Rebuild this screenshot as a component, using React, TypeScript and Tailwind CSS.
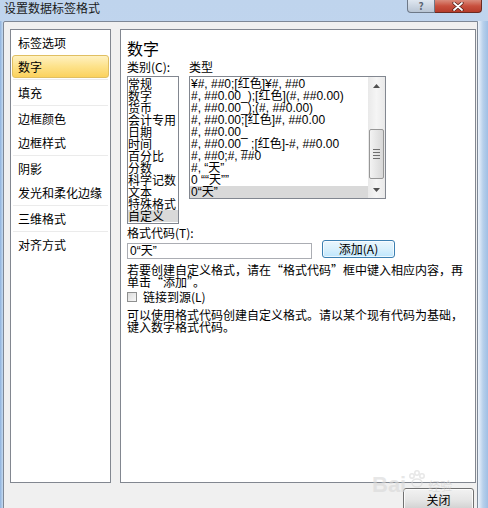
import React from "react";

const navGroups: { label: string; selected?: boolean }[][] = [
  [{ label: "标签选项" }, { label: "数字", selected: true }],
  [{ label: "填充" }],
  [{ label: "边框颜色" }, { label: "边框样式" }],
  [{ label: "阴影" }, { label: "发光和柔化边缘" }],
  [{ label: "三维格式" }],
  [{ label: "对齐方式" }],
];

const categories = [
  "常规",
  "数字",
  "货币",
  "会计专用",
  "日期",
  "时间",
  "百分比",
  "分数",
  "科学记数",
  "文本",
  "特殊格式",
  "自定义",
];

const types = [
  "¥#, ##0;[红色]¥#, ##0",
  "#, ##0.00_);[红色](#, ##0.00)",
  "#, ##0.00_);(#, ##0.00)",
  "#, ##0.00;[红色]#, ##0.00",
  "#, ##0.00_",
  "#, ##0.00_ ;[红色]-#, ##0.00",
  "#, ##0;#, ##0",
  "#, “天”",
  "0 ““天””",
  "0“天”",
];

export default function App() {
  return (
    <div
      lang="zh-CN"
      className="relative w-[488px] h-[508px] overflow-hidden bg-gradient-to-b from-[#bfd4ed] to-[#cadcf1] font-['Noto_Sans_CJK_SC','Liberation_Sans',sans-serif] text-[12px] text-black"
    >
      {/* Title bar */}
      <div className="h-[21px] flex items-start">
        <div className="pl-[4px] pt-[0px] leading-[16px] text-[12px] text-[#1a1a1a]">设置数据标签格式</div>
        <div className="ml-auto mr-[6px] flex">
          <div className="w-[28px] h-[13px] rounded-bl-[4px] border border-t-0 border-[#6d7887] bg-gradient-to-b from-[#dfe7f0] to-[#b9c5d4] flex items-center justify-center">
            <span className="text-[10px] leading-[10px] font-bold text-[#5a6472]">?</span>
          </div>
          <div className="w-[47px] h-[13px] rounded-br-[4px] border border-l-0 border-t-0 border-[#6b2a22] bg-gradient-to-b from-[#d98b7c] via-[#c8503e] to-[#b63c2b] flex items-center justify-center">
            <svg width="12" height="9" viewBox="0 0 12 9">
              <path d="M2 1 L10 8 M10 1 L2 8" stroke="#4a1a14" strokeWidth="3.2" strokeLinecap="round" />
              <path d="M2 1 L10 8 M10 1 L2 8" stroke="#ffffff" strokeWidth="1.8" strokeLinecap="round" />
            </svg>
          </div>
        </div>
      </div>

      {/* Body */}
      <div className="flex h-[487px]">
        <div className="w-[3px] bg-gradient-to-r from-[#8fb2dc] to-[#c5dbf1]" />
        <div className="w-[475px] h-[488px] border border-[#7e8896] rounded-tl-[2px] bg-[#f0f0f0] flex flex-col">
          <div className="flex pl-[6px] pt-[7px] gap-[9px]">
            {/* Left nav */}
            <div className="w-[101px] h-[454px] bg-white border border-[#828790] pt-[1px] flex flex-col">
              {navGroups.map((g, gi) => (
                <React.Fragment key={gi}>
                  {gi > 0 && <div className="h-[2px] mx-[2px] border-t border-[#ebebeb]" />}
                  {g.map((it) =>
                    it.selected ? (
                      <div
                        key={it.label}
                        className="mx-[1px] mb-[1px] h-[23px] rounded-[3px] border border-[#e0bf62] bg-gradient-to-b from-[#fff1bf] via-[#fde28a] to-[#fbd25c] flex items-center pl-[5px]"
                      >
                        {it.label}
                      </div>
                    ) : (
                      <div key={it.label} className="h-[24px] flex items-center pl-[7px]">
                        {it.label}
                      </div>
                    )
                  )}
                </React.Fragment>
              ))}
            </div>

            {/* Right panel */}
            <div className="w-[356px] h-[454px] bg-white border border-[#828790] pl-[6px] pt-[8px] flex flex-col">
              <div className="text-[16px] leading-[20px]">数字</div>
              <div className="mt-[2px] flex leading-[14px]">
                <div className="w-[62px]">类别(C):</div>
                <div>类型</div>
              </div>
              <div className="mt-[2px] flex items-start">
                {/* category list */}
                <div className="w-[52px] h-[148px] border border-[#828790] pt-[1px] flex flex-col">
                  {categories.map((c) => (
                    <div
                      key={c}
                      className={`h-[12px] leading-[12px] text-[12px] whitespace-nowrap ${c === "自定义" ? "bg-[#d9d9d9]" : ""}`}
                    >
                      {c}
                    </div>
                  ))}
                </div>
                {/* type list */}
                <div className="ml-[10px] w-[197px] h-[123px] border border-[#828790] flex">
                  <div className="flex-1 pt-[1px] flex flex-col overflow-hidden font-['Liberation_Sans','Noto_Sans_CJK_SC',sans-serif]">
                    {types.map((t, i) => (
                      <div
                        key={i}
                        className={`h-[12px] leading-[12px] text-[12px] pl-[1px] whitespace-pre ${i === types.length - 1 ? "bg-[#d9d9d9]" : ""}`}
                      >
                        {t}
                      </div>
                    ))}
                  </div>
                  <div className="w-[17px] flex flex-col bg-gradient-to-r from-[#e9e9e9] via-[#f5f5f5] to-[#e9e9e9]">
                    <div className="h-[17px] flex items-center justify-center">
                      <svg width="7" height="4" viewBox="0 0 7 4">
                        <path d="M0 4 L3.5 0 L7 4 Z" fill="#505050" />
                      </svg>
                    </div>
                    <div className="flex-1 pt-[35px] px-[1px]">
                      <div className="h-[50px] rounded-[2px] border border-[#979797] bg-gradient-to-r from-[#f3f3f3] to-[#d8d8d8] flex flex-col items-center justify-center gap-[2px]">
                        <div className="w-[7px] h-[1px] bg-[#6f6f6f]" />
                        <div className="w-[7px] h-[1px] bg-[#6f6f6f]" />
                        <div className="w-[7px] h-[1px] bg-[#6f6f6f]" />
                        <div className="w-[7px] h-[1px] bg-[#6f6f6f]" />
                      </div>
                    </div>
                    <div className="h-[17px] flex items-center justify-center">
                      <svg width="7" height="4" viewBox="0 0 7 4">
                        <path d="M0 0 L3.5 4 L7 0 Z" fill="#505050" />
                      </svg>
                    </div>
                  </div>
                </div>
              </div>

              <div className="mt-[2px] leading-[14px]">格式代码(T):</div>
              <div className="flex items-start">
                <div className="mt-[3px] w-[185px] h-[16px] border border-[#abadb3] bg-white pl-[2px] leading-[14px] font-['Liberation_Sans','Noto_Sans_CJK_SC',sans-serif]">
                  0“天”
                </div>
                <div className="ml-[10px] w-[73px] h-[18px] rounded-[3px] border border-[#3c7fb1] bg-gradient-to-b from-[#eaf6fd] via-[#d9f0fc] to-[#bee6fd] flex items-center justify-center leading-[14px] shadow-[inset_0_0_0_1px_rgba(255,255,255,0.7)]">
                  添加(A)
                </div>
              </div>

              <div className="mt-[5px] leading-[12px] whitespace-nowrap">
                <div>若要创建自定义格式，请在“格式代码”框中键入相应内容，再</div>
                <div>单击“添加”。</div>
              </div>

              <div className="mt-[3px] h-[12px] flex items-center gap-[6px]">
                <div className="w-[10px] h-[10px] border border-[#8e8f8f] bg-gradient-to-br from-[#dcdcdc] to-[#f7f7f7]" />
                <div className="leading-[12px]">链接到源(L)</div>
              </div>

              <div className="mt-[6px] leading-[12px] whitespace-nowrap">
                <div>可以使用格式代码创建自定义格式。请以某个现有代码为基础，</div>
                <div>键入数字格式代码。</div>
              </div>
            </div>
          </div>

          <div className="flex justify-end pr-[3px] mt-[5px]">
            <div className="w-[71px] h-[23px] rounded-[3px] border border-[#707070] bg-gradient-to-b from-[#f2f2f2] via-[#e6e6e6] to-[#cfcfcf] flex items-center justify-center shadow-[inset_0_0_0_1px_rgba(255,255,255,0.8)]">
              关闭
            </div>
          </div>
        </div>
        <div className="w-[10px] bg-gradient-to-r from-[#eef4fb] via-[#b8d0eb] to-[#9fbfe4]" />
      </div>

      {/* Baidu watermark */}
      <div className="absolute left-[372px] top-[470px] flex items-end gap-[2px] pointer-events-none opacity-60">
        <span className="font-['Liberation_Sans',sans-serif] font-bold text-[22px] leading-[22px] text-[#d8d8d8]">Bai</span>
        <svg width="18" height="20" viewBox="0 0 18 20" className="mb-[6px]">
          <circle cx="4" cy="6" r="2.2" fill="none" stroke="#d8d8d8" strokeWidth="1.5" />
          <circle cx="9" cy="3" r="2.2" fill="none" stroke="#d8d8d8" strokeWidth="1.5" />
          <circle cx="14" cy="6" r="2.2" fill="none" stroke="#d8d8d8" strokeWidth="1.5" />
          <ellipse cx="9" cy="13" rx="5" ry="4" fill="none" stroke="#d8d8d8" strokeWidth="1.5" />
        </svg>
        <span className="text-[12px] leading-[14px] mb-[3px] text-[#d0d0d0]">经验</span>
      </div>
    </div>
  );
}
